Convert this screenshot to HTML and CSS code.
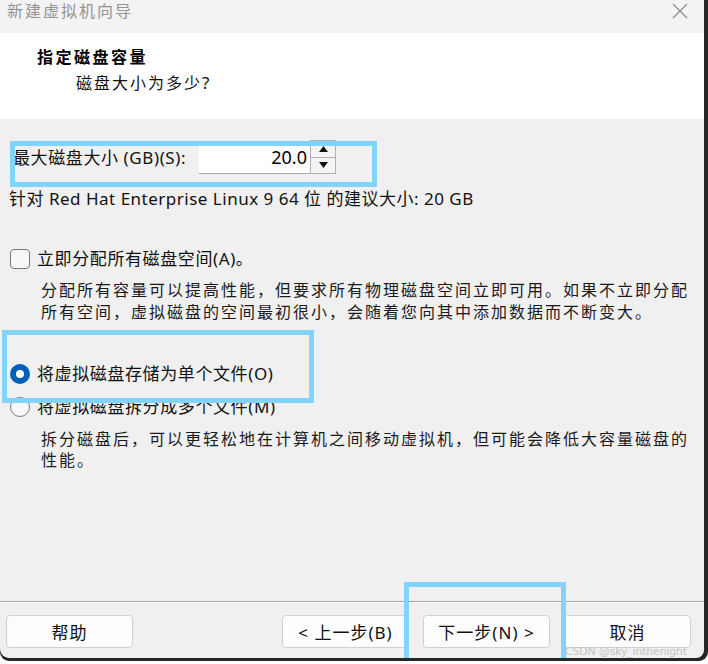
FILE: index.html
```html
<!DOCTYPE html>
<html lang="zh-CN">
<head>
<meta charset="utf-8">
<title>新建虚拟机向导</title>
<link rel="stylesheet" href="styles.css">
</head>
<body>
<div class="frame">
  <div class="dialog">
    <div class="titlebar">
      <span class="title">新建虚拟机向导</span>
      <svg class="close" width="16" height="16" viewBox="0 0 16 16"><path d="M1 1 L15 15 M15 1 L1 15" stroke="#8a8a8a" stroke-width="1.2" fill="none"/></svg>
    </div>
    <div class="header">
      <div class="h-title">指定磁盘容量</div>
      <div class="h-sub">磁盘大小为多少<span class="q">?</span></div>
    </div>
    <div class="body">
      <div class="size-row">
        <span class="label">最大磁盘大小 (GB)(S):</span>
        <div class="spin">
          <div class="spin-input">20.0</div>
          <div class="spin-btns">
            <div class="spin-btn"><svg width="9" height="6" viewBox="0 0 9 6"><path d="M0 6 L4.5 0 L9 6 Z" fill="#111"/></svg></div>
            <div class="spin-btn"><svg width="9" height="6" viewBox="0 0 9 6"><path d="M0 0 L4.5 6 L9 0 Z" fill="#111"/></svg></div>
          </div>
        </div>
      </div>
      <div class="rec">针对 Red Hat Enterprise Linux 9 64 位 的建议大小: 20 GB</div>

      <div class="opt opt-check">
        <span class="checkbox"></span>
        <span class="label">立即分配所有磁盘空间(A)。</span>
      </div>
      <p class="desc">分配所有容量可以提高性能，但要求所有物理磁盘空间立即可用。如果不立即分配所有空间，虚拟磁盘的空间最初很小，会随着您向其中添加数据而不断变大。</p>

      <div class="opt opt-radio1">
        <span class="radio on"></span>
        <span class="label">将虚拟磁盘存储为单个文件(O)</span>
      </div>
      <div class="opt opt-radio2">
        <span class="radio"></span>
        <span class="label">将虚拟磁盘拆分成多个文件(M)</span>
      </div>
      <p class="desc">拆分磁盘后，可以更轻松地在计算机之间移动虚拟机，但可能会降低大容量磁盘的性能。</p>

      <div class="mark mark-size"></div>
      <div class="mark mark-radio"></div>
    </div>
    <div class="footer">
      <button class="btn">帮助</button>
      <div class="nav">
        <button class="btn">&lt; 上一步(B)</button>
        <button class="btn">下一步(N) &gt;</button>
        <button class="btn">取消</button>
      </div>
      <div class="mark mark-next"></div>
      <span class="watermark">CSDN @sky_inthenight</span>
    </div>
  </div>
</div>
</body>
</html>
```

FILE: styles.css
```css
* { box-sizing: border-box; }
html, body { margin: 0; padding: 0; background: #ffffff; }
body {
  font-family: "Noto Sans", "Noto Sans CJK SC", sans-serif;
  color: #111;
}
.frame {
  width: 708px;
  height: 661px;
  background: #262626;
  border-bottom-right-radius: 9px;
  border-bottom-left-radius: 9px;
  overflow: hidden;
}
.dialog {
  width: 704px;
  height: 658px;
  background: #f0f0f0;
  display: flex;
  flex-direction: column;
  border-bottom-left-radius: 9px;
  border-bottom-right-radius: 8px;
  overflow: hidden;
}
.titlebar {
  height: 33px;
  flex: none;
  background: #f3f3f3;
  display: flex;
  align-items: flex-start;
  justify-content: space-between;
  padding: 2px 16px 0 7px;
}
.title {
  font-family: "Noto Sans CJK SC", sans-serif;
  font-size: 16px;
  letter-spacing: 2px;
  line-height: 17px;
  color: #949494;
}
.close { margin-top: 1px; }
.header {
  height: 86px;
  flex: none;
  background: #ffffff;
  padding: 12px 0 0 37px;
}
.h-title {
  font-family: "Noto Sans CJK SC", sans-serif;
  font-weight: 700;
  font-size: 16px;
  letter-spacing: 2.5px;
  line-height: 22px;
  color: #000;
}
.h-sub {
  font-family: "Noto Sans CJK SC", sans-serif;
  font-size: 16px;
  letter-spacing: 2px;
  line-height: 22px;
  margin: 4px 0 0 39px;
  color: #111;
}
.q { font-family: "Noto Sans", sans-serif; font-size: 17px; }
.body {
  flex: 1;
  position: relative;
  padding: 21px 0 0 9px;
}
.label {
  font-size: 17px;
  letter-spacing: 0.6px;
  line-height: 22px;
}
.size-row {
  display: flex;
  align-items: center;
  height: 34px;
  padding-left: 4px;
}
.size-row .label { width: 186px; flex: none; margin-top: 2px; }
.spin { display: flex; height: 34px; }
.spin-input {
  width: 111px;
  height: 29px;
  margin-top: 5px;
  background: #fff;
  border-bottom: 1px solid #a8a8a8;
  text-align: right;
  padding-right: 3px;
  font-size: 18px;
  line-height: 24px;
  color: #000;
}
.spin-btns {
  display: flex;
  flex-direction: column;
  width: 26px;
  border: 1px solid #b0b0b0;
  background: #f4f4f4;
}
.spin-btn {
  flex: 1;
  display: flex;
  align-items: center;
  justify-content: center;
}
.spin-btn + .spin-btn { border-top: 1px solid #b0b0b0; }
.rec {
  margin-top: 14px;
  font-size: 17px;
  letter-spacing: 0.5px;
  line-height: 22px;
}
.opt {
  display: flex;
  align-items: center;
  height: 22px;
  padding-left: 1px;
}
.opt .label { margin-left: 7px; }
.opt-check { margin-top: 38px; }
.opt-radio1 { margin-top: 41px; }
.opt-radio2 { margin-top: 11px; }
.checkbox {
  width: 20px;
  height: 20px;
  border: 1px solid #7a7a7a;
  border-radius: 4px;
  background: #f7f7f7;
  flex: none;
}
.radio {
  width: 20px;
  height: 20px;
  border-radius: 50%;
  border: 1px solid #7a7a7a;
  background: #f7f7f7;
  flex: none;
}
.radio.on {
  border: 6px solid #005fb8;
  background: #ffffff;
}
.desc {
  margin: 8px 0 0 32px;
  font-family: "Noto Sans CJK SC", sans-serif;
  font-size: 16px;
  letter-spacing: 2px;
  line-height: 22px;
  width: 655px;
  color: #1a1a1a;
}
.opt-radio2 + .desc { margin-top: 10px; line-height: 21px; }
.mark {
  position: absolute;
  border: 5px solid #82d3fe;
  pointer-events: none;
}
.mark-size { left: 10px; top: 22px; width: 367px; height: 46px; }
.mark-radio { left: 2px; top: 211px; width: 312px; height: 73px; }
.footer {
  position: relative;
  height: 57px;
  flex: none;
  border-top: 1px solid #a0a0a0;
  box-shadow: inset 0 1px 0 #ffffff;
  display: flex;
  justify-content: space-between;
  align-items: flex-start;
  padding: 13px 13px 0 6px;
}
.nav { display: flex; gap: 14px; }
.btn {
  width: 127px;
  height: 33px;
  background: #fdfdfd;
  border: 1px solid #d0d0d0;
  border-radius: 4px;
  font-family: "Noto Sans", "Noto Sans CJK SC", sans-serif;
  font-size: 17px;
  letter-spacing: 1px;
  color: #111;
  padding: 0;
}
.mark-next { left: 404px; top: -20px; width: 162px; height: 90px; }
.watermark {
  position: absolute;
  left: 565px;
  top: 43px;
  font-family: "DejaVu Sans", sans-serif;
  font-size: 11px;
  color: #c4c4c4;
  letter-spacing: -0.2px;
}
```
